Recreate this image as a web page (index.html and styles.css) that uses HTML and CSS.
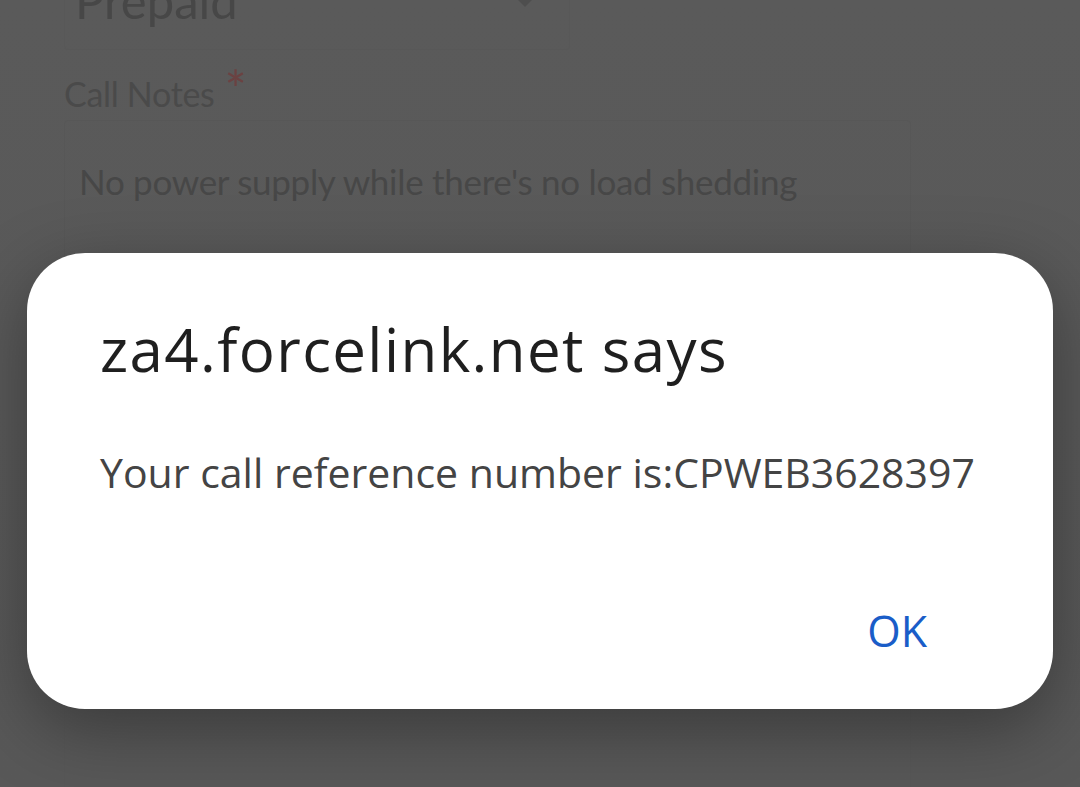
FILE: index.html
```html
<!DOCTYPE html>
<html>
<head>
<meta charset="utf-8">
<link rel="stylesheet" href="styles.css">
</head>
<body>
<div class="page">
  <div class="form">
    <div class="select-row">
      <div class="select">
        <span class="select-value">Prepaid</span>
        <span class="caret"></span>
      </div>
    </div>
    <div class="label">Call Notes<span class="req">*</span></div>
    <div class="textarea">No power supply while there's no load shedding</div>
  </div>
</div>
<div class="dialog">
  <div class="dialog-title">za4.forcelink.net says</div>
  <div class="dialog-msg">Your call reference number is:CPWEB3628397</div>
  <div class="dialog-actions"><span class="ok">OK</span></div>
</div>
</body>
</html>
```

FILE: styles.css
```css
html, body {
  margin: 0;
  padding: 0;
  width: 1080px;
  height: 787px;
  overflow: hidden;
  background: #5a5a5a;
}
.page {
  height: 787px;
  overflow: hidden;
  background: linear-gradient(#5a5a5a, #585858);
}
.form {
  margin-top: -70px;
  padding-left: 64px;
  font-family: "Lato", "Open Sans", sans-serif;
}
.select-row {
  display: flex;
}
.select {
  width: 506px;
  height: 120px;
  box-sizing: border-box;
  border: 1px solid #585858;
  border-radius: 4px;
  display: flex;
  align-items: flex-end;
  justify-content: space-between;
  padding: 0 30px 50px 10px;
}
.select-value {
  font-size: 49px;
  color: #474747;
  line-height: 1;
  margin-bottom: -26px;
}
.caret {
  width: 0;
  height: 0;
  border-left: 14px solid transparent;
  border-right: 14px solid transparent;
  border-top: 14px solid #4e4e4e;
  margin-bottom: -8px;
}
.label {
  margin-top: 24px;
  font-size: 34px;
  color: #4a4a4a;
  line-height: 40px;
  letter-spacing: -0.3px;
}
.req {
  color: #6b4242;
  font-size: 52px;
  position: relative;
  top: 2px;
  margin-left: 10px;
  line-height: 0;
}
.textarea {
  margin-top: 6px;
  width: 847px;
  height: 700px;
  box-sizing: border-box;
  border: 1px solid #575757;
  border-radius: 4px;
  padding: 39px 14px;
  font-size: 35px;
  color: #474747;
  letter-spacing: -0.3px;
}
.dialog {
  position: absolute;
  left: 27px;
  top: 253px;
  width: 1026px;
  height: 456px;
  box-sizing: border-box;
  background: #ffffff;
  border-radius: 58px;
  box-shadow: 0 20px 70px rgba(0, 0, 0, 0.35);
  padding: 0 40px 0 73px;
  display: flex;
  flex-direction: column;
  font-family: "Open Sans", "Roboto", sans-serif;
}
.dialog-title {
  margin-top: 56px;
  font-size: 60px;
  line-height: 80px;
  letter-spacing: 1.4px;
  color: #1f1f1f;
}
.dialog-msg {
  margin-top: 55px;
  font-size: 41px;
  line-height: 56px;
  color: #444444;
  white-space: nowrap;
}
.dialog-actions {
  margin-top: auto;
  margin-bottom: 50px;
  margin-right: 86px;
  display: flex;
  justify-content: flex-end;
}
.ok {
  font-size: 43px;
  line-height: 56px;
  color: #1a5dc8;
  font-weight: 500;
}
```
